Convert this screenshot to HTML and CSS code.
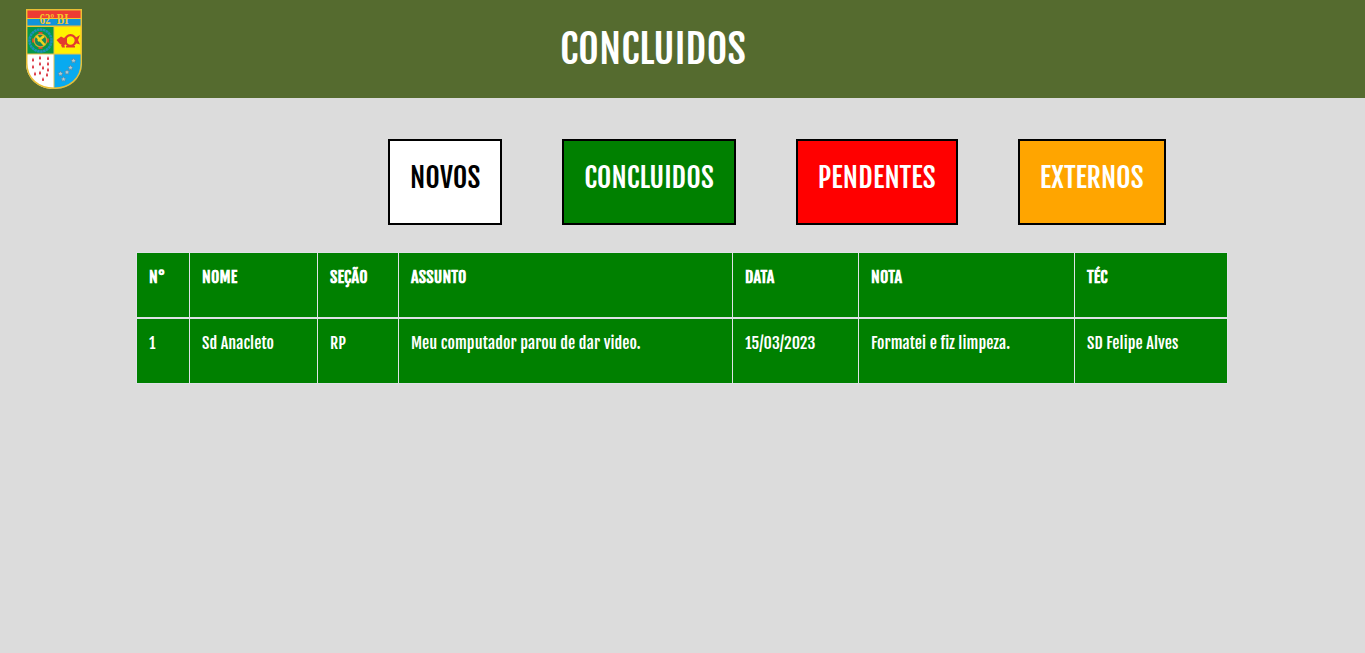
FILE: index.html
```html
<!DOCTYPE html>
<html lang="pt-BR">
<head>
<meta charset="utf-8">
<title>Concluidos</title>
<link rel="stylesheet" href="styles.css">
</head>
<body>
<header class="topbar">
  <svg class="crest" viewBox="0 0 56 80" role="img" aria-label="62º BI">
    <defs><clipPath id="shield"><path d="M0 0H56V54C56 70 43 80 28 80S0 70 0 54Z"/></clipPath></defs>
    <g clip-path="url(#shield)">
      <path fill="#ee3b33" d="M0 0H56V10H0Z"/>
      <path fill="#1193dc" d="M0 10H56V18H0Z"/>
      <path fill="#f4c430" d="M0 9H56V10H0ZM0 16.600H56V18H0Z"/>
      <path fill="#06974a" d="M0 18H28V45H0Z"/>
      <path fill="#fff200" d="M28 18H56V45H28Z"/>
      <path fill="#fff" d="M0 45H28V80H0Z"/>
      <path fill="#08aaf0" d="M28 45H56V80H28Z"/>
      <path fill="none" stroke="#e8c34a" stroke-width="1" d="M28 18V80M0 45H56"/>
    </g>
    <circle cx="14.500" cy="31.500" r="11" fill="none" stroke="#1b8fb8" stroke-width="2.600" stroke-dasharray="2.500 .5"/>
    <path stroke="#d9482b" stroke-width="4" d="M14.500 23V40M6 31.500H23"/>
    <circle cx="14.500" cy="31.500" r="6.300" fill="#168a5b" stroke="#d5a52b" stroke-width="1.300"/>
    <path fill="none" stroke="#f2d31b" stroke-width="2.600" d="M10.500 27L18.500 36M18 27L12 32"/>
    <circle cx="44.500" cy="31.500" r="5.300" fill="none" stroke="#e33b2e" stroke-width="2.300"/>
    <path fill="#e33b2e" d="M30.500 31L35 27.500L38 29L41 27V34L38 36.500L34 35ZM49 29L54 26L52 31L54 35.500L49 34ZM35 36L38 35L39 38.500H36ZM40 37H49V38.500H40Z"/>
    <g fill="#d92a38">
      <path id="drop" d="M7 48.500l1 2.500-.3 1.500h-1.400l-.3-1.500Z"/>
      <use href="#drop" x="7" y="-2"/>
      <use href="#drop" x="15" y="-1.500"/>
      <use href="#drop" y="7"/>
      <use href="#drop" x="7" y="4"/>
      <use href="#drop" x="15" y="4"/>
      <use href="#drop" x="2" y="14"/>
      <use href="#drop" x="7" y="13"/>
      <use href="#drop" x="10" y="8"/>
      <use href="#drop" x="15" y="10"/>
      <use href="#drop" x="14" y="15"/>
      <use href="#drop" x="10" y="19.500"/>
    </g>
    <g fill="#b6cbd0" stroke="#557f96" stroke-width=".5">
      <path id="star" d="M47.500 49l.8 1.700 1.800.2-1.300 1.300.3 1.800-1.600-.9-1.600.9.300-1.800-1.300-1.300 1.800-.2Z"/>
      <use href="#star" x="-3" y="7"/>
      <use href="#star" x="-6.500" y="11.500"/>
      <use href="#star" x="-13" y="13"/>
      <use href="#star" x="-10" y="18.500"/>
    </g>
    <path fill="none" stroke="#e9bf35" stroke-width="1.500" d="M.7 .7H55.300V54C55.300 70 43 79.300 28 79.300S.7 70 .7 54Z"/>
    <text class="crest-name" x="13.500" y="14.800" textLength="29" lengthAdjust="spacingAndGlyphs">62º BI</text>
  </svg>
  <h1 class="title">CONCLUIDOS</h1>
</header>
<main>
  <nav class="tabs">
    <a class="tab tab-new">NOVOS</a>
    <a class="tab tab-done">CONCLUIDOS</a>
    <a class="tab tab-pending">PENDENTES</a>
    <a class="tab tab-external">EXTERNOS</a>
  </nav>
  <table class="calls">
    <colgroup><col class="c-num"><col class="c-name"><col class="c-section"><col class="c-subject"><col class="c-date"><col class="c-note"><col class="c-tech"></colgroup>
    <thead><tr><th>N°</th><th>NOME</th><th>SEÇÃO</th><th>ASSUNTO</th><th>DATA</th><th>NOTA</th><th>TÉC</th></tr></thead>
    <tbody><tr><td>1</td><td>Sd Anacleto</td><td>RP</td><td>Meu computador parou de dar video.</td><td>15/03/2023</td><td>Formatei e fiz limpeza.</td><td>SD Felipe Alves</td></tr></tbody>
  </table>
</main>
</body>
</html>
```
FILE: styles.css
```css
* { box-sizing: border-box; }
body {
  margin: 0;
  background: #dcdcdc;
  font-family: "Fjalla One", "Roboto", sans-serif;
}
.topbar {
  display: flex;
  height: 98px;
  padding: 9px 0 0 26px;
  background: #556b2f;
}
.crest { width: 56px; height: 80px; }
.crest-name {
  font: 700 14px "Liberation Serif", serif;
  fill: #f5c62c;
}
.title {
  margin: 16px 0 0 478px;
  color: #fff;
  font-size: 40px;
  font-weight: 400;
  line-height: 48px;
  letter-spacing: .1px;
}
.tabs {
  display: flex;
  gap: 60px;
  padding: 41px 0 0 388px;
}
.tab {
  height: 86px;
  padding: 20px 20px 0;
  border: 2px solid #000;
  color: #fff;
  font-size: 28px;
  line-height: 34px;
}
.tab-new { background: #fff; color: #000; }
.tab-done { background: #008000; }
.tab-pending {
  width: 162px;
  background: #f00;
  letter-spacing: .33px;
}
.tab-external { background: #ffa500; }
.calls {
  width: 1092px;
  margin: 27px 0 0 136px;
  border-collapse: collapse;
  table-layout: fixed;
  color: #fff;
  font-size: 16px;
  line-height: 24px;
  letter-spacing: .09px;
}
.calls th, .calls td {
  height: 65px;
  padding: 12px 11px 27px 12px;
  border: 1px solid #dee2e6;
  background: #008000;
  background-clip: padding-box;
  text-align: left;
  vertical-align: top;
}
.calls td { height: 66px; padding-bottom: 28px; }
.calls th { letter-spacing: .25px; }
.calls thead th { border-bottom-width: 2px; }
.c-num { width: 53px; }
.c-name { width: 128px; }
.c-section { width: 81px; }
.c-subject { width: 334px; }
.c-date { width: 126px; }
.c-note { width: 216px; }
.c-tech { width: 153px; }
```
